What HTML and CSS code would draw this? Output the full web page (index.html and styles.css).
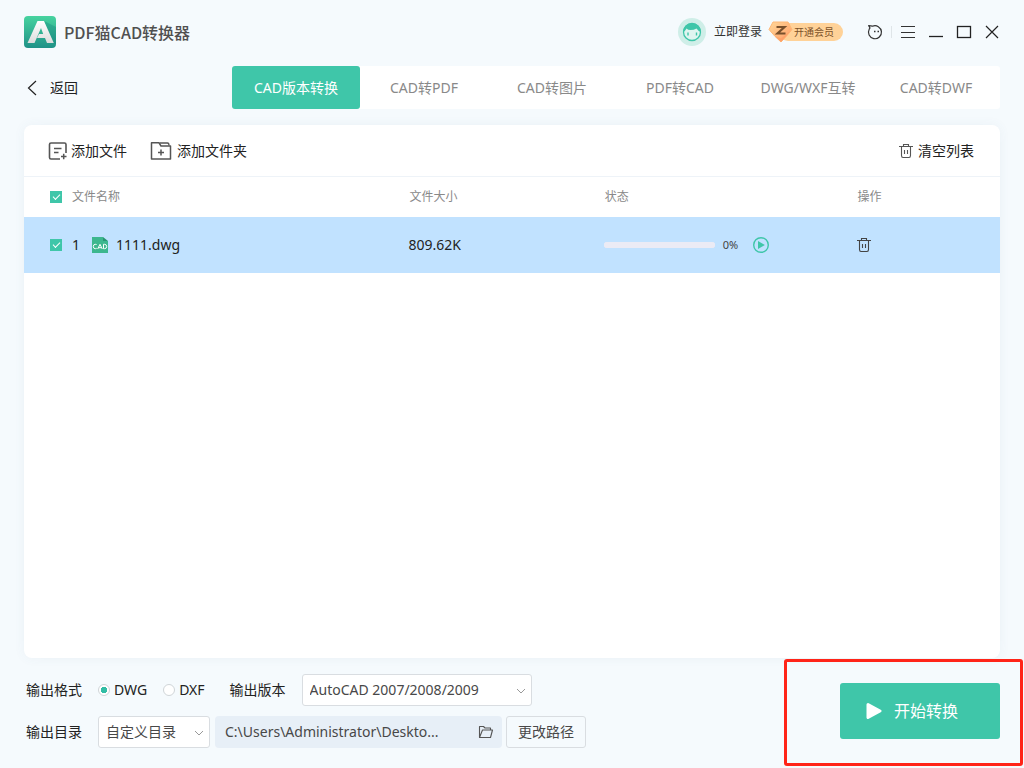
FILE: index.html
```html
<!DOCTYPE html>
<html lang="zh-CN">
<head>
<meta charset="utf-8">
<meta name="viewport" content="width=device-width, initial-scale=1">
<title>PDF猫CAD转换器</title>
<link rel="stylesheet" href="styles.css">
</head>
<body>
<div class="app">
  <header class="titlebar">
    <svg class="logo" width="32" height="32" viewBox="0 0 32 32" aria-hidden="true">
      <defs>
        <linearGradient id="logo-bg" x1="0" y1="0" x2="0" y2="1"><stop offset="0" stop-color="#47d39f"/><stop offset="1" stop-color="#1f9187"/></linearGradient>
        <linearGradient id="logo-a" x1="0" y1="0" x2="0" y2="1"><stop offset="0" stop-color="#fff"/><stop offset="1" stop-color="#dcdcdc"/></linearGradient>
      </defs>
      <rect width="32" height="32" rx="4" fill="url(#logo-bg)"/>
      <path d="M20 5L32 11V28L29 27Z" fill="#12857c" opacity=".35"/>
      <path d="M13.500 5H20L29.800 27H23L21 22H13L15 18H19.200L17 12L10.500 27H3.500Z" fill="url(#logo-a)"/>
    </svg>
    <h1 class="app-name">PDF猫CAD转换器</h1>
    <div class="account">
      <svg width="28" height="28" viewBox="0 0 28 28" aria-hidden="true">
        <circle cx="14" cy="14" r="14" fill="#cfeee8"/>
        <circle cx="14" cy="14" r="8.500" fill="#dff5f0" stroke="#3fc6a9" stroke-width="1.300"/>
        <path d="M5 14A9 9 0 0 1 23 14Q20.500 13.500 18.500 10.500Q16 12 12.500 12Q10 12 8.500 10.500Q7.500 13 5 14Z" fill="#3fc6a9"/>
        <path d="M10 14.500V17.500M18.500 14.500V17.500" fill="none" stroke="#3fc6a9" stroke-width="1.400"/>
      </svg>
      <a class="login" href="#">立即登录</a>
      <a class="vip" href="#">
        <svg class="vip-gem" width="25" height="22" viewBox="0 0 25 22" aria-hidden="true">
          <defs><linearGradient id="gem" x1="0" y1="0" x2="1" y2="1"><stop offset="0" stop-color="#ffd89a"/><stop offset="1" stop-color="#ff9a62"/></linearGradient></defs>
          <path d="M5 1H20L24 8.500Q18 16 13 21Q7 16 1 8.500Z" fill="url(#gem)" stroke="#ffb877" stroke-linejoin="round"/>
          <path d="M6 14.500L13 17.500L23 9.500Q18 16 13 21Z" fill="#ff8c59" opacity=".35"/>
          <path d="M8.500 6H16.500L9.500 12.500H17.500" fill="none" stroke="#79502c" stroke-width="2.200"/>
        </svg>
        <span>开通会员</span>
      </a>
    </div>
    <div class="window-tools">
      <button class="icon-btn" aria-label="消息">
        <svg width="16" height="16" viewBox="0 0 16 16"><path d="M3 4L1.700 1.600L5.500 2.200A6.500 6.500 0 1 1 2.200 5.200Z" fill="none" stroke="#333" stroke-width="1.200" stroke-linejoin="round"/><path d="M7 7.500H8.500M10.500 7.500H12" stroke="#333" stroke-width="1.600"/></svg>
      </button>
      <span class="divider"></span>
      <button class="icon-btn" aria-label="菜单"><svg width="16" height="16" viewBox="0 0 16 16"><path d="M1 2.500H15M1 8.500H15M1 13.500H15" stroke="#333"/></svg></button>
      <button class="icon-btn" aria-label="最小化"><svg width="16" height="16" viewBox="0 0 16 16"><path d="M1 12.500H15" stroke="#222" stroke-width="1.300"/></svg></button>
      <button class="icon-btn" aria-label="最大化"><svg width="16" height="16" viewBox="0 0 16 16"><rect x="1.500" y="2.500" width="13" height="11" fill="none" stroke="#222" stroke-width="1.300"/></svg></button>
      <button class="icon-btn" aria-label="关闭"><svg width="16" height="16" viewBox="0 0 16 16"><path d="M2 2L14 14M14 2L2 14" stroke="#222" stroke-width="1.200"/></svg></button>
    </div>
  </header>

  <div class="nav-row">
    <button class="back">
      <svg width="12" height="16" viewBox="0 0 12 16" aria-hidden="true"><path d="M10 1L2.500 8L10 15" fill="none" stroke="#222" stroke-width="1.200"/></svg>
      <span>返回</span>
    </button>
    <nav class="tabs">
      <button class="tab active">CAD版本转换</button>
      <button class="tab">CAD转PDF</button>
      <button class="tab">CAD转图片</button>
      <button class="tab">PDF转CAD</button>
      <button class="tab">DWG/WXF互转</button>
      <button class="tab">CAD转DWF</button>
    </nav>
  </div>

  <main class="card">
    <div class="toolbar">
      <button class="tool">
        <svg width="20" height="20" viewBox="0 0 20 20" aria-hidden="true"><path d="M18 12V3.500Q18 2 16.500 2H3Q1.500 2 1.500 3.500V16.500Q1.500 18 3 18H12" fill="none" stroke="#555" stroke-width="1.600"/><path d="M6 7.500H13.500M6 11.500H10.500M13 15.500H18.500M15.700 12.800V18.300" fill="none" stroke="#555" stroke-width="1.500"/></svg>
        <span>添加文件</span>
      </button>
      <button class="tool folder">
        <svg width="22" height="20" viewBox="0 0 22 20" aria-hidden="true"><path d="M1.500 18V1.800H9L11 5H20.500V18Z" fill="none" stroke="#555" stroke-width="1.500" stroke-linejoin="round"/><path d="M9.500 2H17.500Q19 2 19 4.500" fill="none" stroke="#555" stroke-width="1.300"/><path d="M8 11.500H14M11 8.500V14.500" stroke="#555" stroke-width="1.500"/></svg>
        <span>添加文件夹</span>
      </button>
      <button class="tool clear">
        <svg width="14" height="16" viewBox="0 0 14 16" aria-hidden="true"><path d="M0 3.500H14M4.500 3V1.500H9.500V3M2.500 4V12.500Q2.500 14.500 4 14.500H10Q11.500 14.500 11.500 12.500V4M5.500 7V11M8.500 7V11" fill="none" stroke="#555" stroke-width="1.100"/></svg>
        <span>清空列表</span>
      </button>
    </div>
    <table class="files">
      <colgroup><col class="c-name"><col class="c-size"><col class="c-state"><col class="c-op"></colgroup>
      <thead>
        <tr>
          <th scope="col"><label class="name-cell"><input class="check" type="checkbox" checked><span>文件名称</span></label></th>
          <th scope="col">文件大小</th>
          <th scope="col">状态</th>
          <th scope="col">操作</th>
        </tr>
      </thead>
      <tbody>
        <tr>
          <td>
            <label class="name-cell">
              <input class="check" type="checkbox" checked>
              <span class="index">1</span>
              <svg class="file-icon" width="16" height="16" viewBox="0 0 16 16" aria-hidden="true"><path d="M0 0H11V4H16V16H0Z" fill="#3db78e"/><path d="M11 0L16 4H11Z" fill="#289673"/><path d="M4.800 8Q4.500 7.300 3.300 7.300Q1.300 7.300 1.300 9.500Q1.300 11.700 3.300 11.700Q4.500 11.700 4.800 11M5.700 12L8 7.300L10.300 12M6.500 10.700H9.500M11.500 7.300V11.700H12.500Q14.700 11.700 14.700 9.500Q14.700 7.300 12.500 7.300Z" fill="none" stroke="#fff"/></svg>
              <span>1111.dwg</span>
            </label>
          </td>
          <td>809.62K</td>
          <td>
            <div class="state">
              <progress class="bar" value="0" max="100" aria-label="转换进度"></progress>
              <span class="percent">0%</span>
              <button class="icon-btn" aria-label="开始"><svg width="16" height="16" viewBox="0 0 16 16"><circle cx="8" cy="8" r="7.300" fill="none" stroke="#3fc6a9" stroke-width="1.400"/><path d="M5 4L11.800 8L5 12Z" fill="#3fc6a9"/></svg></button>
            </div>
          </td>
          <td><button class="icon-btn" aria-label="删除"><svg width="14" height="16" viewBox="0 0 14 16"><path d="M0 3.500H14M4.500 3V1.500H9.500V3M2.500 4V12.500Q2.500 14.500 4 14.500H10Q11.500 14.500 11.500 12.500V4M5.500 7V11M8.500 7V11" fill="none" stroke="#444" stroke-width="1.100"/></svg></button></td>
        </tr>
      </tbody>
    </table>
  </main>

  <footer class="footer">
    <div class="options">
      <div class="line">
        <span class="label">输出格式</span>
        <div class="radios">
          <label class="radio"><input type="radio" name="format" checked><span>DWG</span></label>
          <label class="radio"><input type="radio" name="format"><span>DXF</span></label>
        </div>
        <label class="label version" for="version">输出版本</label>
        <div class="select wide">
          <select id="version"><option>AutoCAD 2007/2008/2009</option></select>
          <svg class="chevron" width="10" height="6" viewBox="0 0 10 6" aria-hidden="true"><path d="M1 1L5 5L9 1" fill="none" stroke="#999"/></svg>
        </div>
      </div>
      <div class="line">
        <label class="label" for="dir">输出目录</label>
        <div class="select">
          <select id="dir"><option>自定义目录</option></select>
          <svg class="chevron" width="10" height="6" viewBox="0 0 10 6" aria-hidden="true"><path d="M1 1L5 5L9 1" fill="none" stroke="#999"/></svg>
        </div>
        <div class="path">
          <input type="text" value="C:\Users\Administrator\Deskto..." aria-label="输出路径" readonly>
          <button class="icon-btn" aria-label="打开文件夹"><svg width="16" height="14" viewBox="0 0 16 14"><path d="M1.500 12.500V1.500H5.500L7 3H12.500V5M1.500 12.500L4.500 5H14.500L12.500 12.500Z" fill="none" stroke="#555" stroke-width="1.100" stroke-linejoin="round"/></svg></button>
        </div>
        <button class="change">更改路径</button>
      </div>
    </div>
    <div class="start-area">
      <button class="start">
        <svg width="16" height="18" viewBox="0 0 16 18" aria-hidden="true"><path d="M2 2.500L14 9L2 15.500Z" fill="#fff" stroke="#fff" stroke-width="3" stroke-linejoin="round"/></svg>
        <span>开始转换</span>
      </button>
    </div>
  </footer>
</div>
</body>
</html>
```
FILE: styles.css
```css
* { box-sizing: border-box; }

body {
  margin: 0;
  background: #f5fafd;
  color: #222;
  font: 14px/20px "Noto Sans", "Noto Sans CJK SC", sans-serif;
}

button, input, select { font: inherit; color: inherit; }
button { padding: 0; border: 0; background: none; white-space: nowrap; }
a { color: inherit; text-decoration: none; }
svg { display: block; flex: none; }

.app {
  display: flex;
  flex-direction: column;
  min-height: 100vh;
}

.titlebar {
  display: flex;
  align-items: center;
  height: 64px;
  padding: 0 24px;
}
.app-name {
  margin: 0 auto 0 8px;
  color: #505050;
  font-size: 16px;
  font-weight: 500;
  font-family: "Noto Sans CJK SC", sans-serif;
}
.account { display: flex; align-items: center; margin-right: 24px; }
.login { margin: 0 6px 0 8px; color: #333; font-size: 12px; }
.vip { position: relative; padding-left: 26px; }
.vip span {
  display: block;
  height: 18px;
  margin-left: -15px;
  padding: 0 9px 0 15px;
  border-radius: 9px;
  background: #ffd298;
  color: #7c5128;
  font-size: 10px;
  line-height: 18px;
}
.vip-gem { position: absolute; left: 0; top: -2px; }

.window-tools { display: flex; align-items: center; gap: 12px; }
.icon-btn { display: block; }
.divider { width: 1px; height: 12px; margin: 0 -4px; background: #dfe5e8; }

.nav-row {
  display: grid;
  grid-template-columns: 208px 1fr;
  padding: 2px 24px 0;
}
.back { display: flex; align-items: center; gap: 12px; padding-left: 2px; }
.tabs {
  display: flex;
  height: 43px;
  border-radius: 3px;
  background: #fff;
}
.tab { flex: 1 1 0; color: #898989; }
.tab.active { border-radius: 3px; background: #3fc6a9; color: #fff; }

.card {
  flex: 1;
  margin: 16px 24px 0;
  border-radius: 8px;
  background: #fff;
  box-shadow: 0 0 12px rgba(60, 110, 140, 0.06);
}
.toolbar {
  display: flex;
  align-items: center;
  height: 52px;
  padding: 0 26px 0 24px;
  border-bottom: 1px solid #eef3f8;
}
.tool { display: flex; align-items: center; gap: 3px; }
.tool.folder { margin-left: 23px; gap: 5px; }
.tool.clear { margin-left: auto; gap: 5px; }

.files { width: 100%; border-collapse: collapse; table-layout: fixed; }
.c-name { width: 39.4%; }
.c-size { width: 20%; }
.c-state { width: 25.9%; }
.files th, .files td { padding: 0; text-align: left; }
.files th { height: 40px; color: #898989; font-size: 12px; font-weight: 400; }
.files th + th { padding-left: 1px; }
.files td { height: 56px; }
.files tbody tr { background: #c1e2ff; }
.name-cell { display: flex; align-items: center; padding-left: 26px; }
.check {
  appearance: none;
  display: grid;
  place-items: center;
  width: 12px;
  height: 12px;
  margin: 0 10px 0 0;
  background: #3fc6a9;
}
.check:checked::before {
  content: "";
  width: 6px;
  height: 3px;
  margin-bottom: 2px;
  border: solid #fff;
  border-width: 0 0 1px 1px;
  transform: rotate(-45deg);
}
.index { width: 20px; }
.file-icon { margin-right: 8px; }
.state { display: flex; align-items: center; }
.bar {
  appearance: none;
  width: 111px;
  height: 6px;
  border: 0;
  border-radius: 3px;
  background: #ebebf5;
}
.bar::-webkit-progress-bar { border-radius: 3px; background: #ebebf5; }
.bar::-webkit-progress-value { background: #3fc6a9; }
.percent { width: 30px; margin-left: 8px; color: #444; font-size: 11px; }

.footer {
  display: flex;
  justify-content: space-between;
  padding: 16px 24px 20px;
}
.options { display: grid; gap: 10px; }
.line { display: flex; align-items: center; }
.label { width: 56px; margin: 0 16px 0 2px; }
.label.version { margin-left: 0; }
.radios { display: flex; gap: 16px; margin-right: 25px; }
.radio { display: flex; align-items: center; gap: 4px; }
.radio input {
  appearance: none;
  width: 12px;
  height: 12px;
  margin: 0;
  border: 1px solid #d0d5d8;
  border-radius: 50%;
  background: #fff;
}
.radio input:checked { background: radial-gradient(circle, #32bda5 3px, #fff 3px); }
.select { position: relative; width: 112px; }
.select.wide { width: 230px; }
.select select {
  appearance: none;
  display: block;
  width: 100%;
  height: 32px;
  padding: 0 24px 0 7px;
  border: 1px solid #d9dde1;
  border-radius: 3px;
  background: #fff;
  color: #484848;
}
.chevron { position: absolute; right: 6px; top: 14px; pointer-events: none; }
.path {
  display: flex;
  align-items: center;
  width: 287px;
  height: 32px;
  margin: 0 4px 0 5px;
  padding: 0 8px 0 10px;
  border-radius: 4px;
  background: #e7eff7;
  color: #484848;
}
.path input { flex: 1; min-width: 0; padding: 0; border: 0; outline: 0; background: none; }
.change {
  width: 80px;
  height: 32px;
  border: 1px solid #d9dde1;
  border-radius: 3px;
  color: #484848;
}

.start-area { position: relative; padding-top: 9px; }
.start-area::before {
  content: "";
  position: absolute;
  inset: -15px -23px -18px -56px;
  border: 3px solid #ff2418;
  border-radius: 3px;
  pointer-events: none;
}
.start {
  display: flex;
  align-items: center;
  gap: 12px;
  width: 160px;
  height: 56px;
  padding-left: 26px;
  border-radius: 3px;
  background: #3fc6a9;
  color: #fff;
  font-size: 16px;
}
```
